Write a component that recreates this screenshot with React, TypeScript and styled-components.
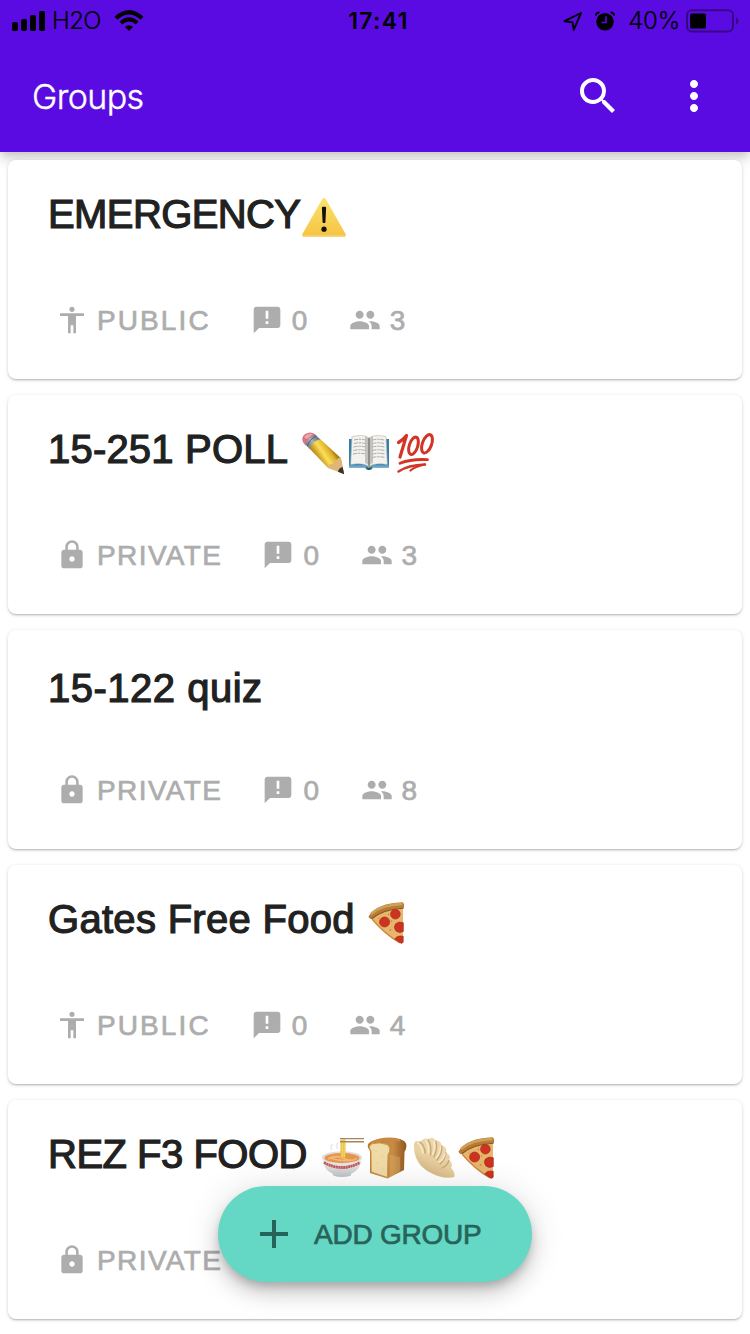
import React from 'react'
import styled, { createGlobalStyle } from 'styled-components'
import {
  MdAccessibility,
  MdAdd,
  MdAnnouncement,
  MdLock,
  MdMoreVert,
  MdPeople,
  MdSearch,
} from 'react-icons/md'

const GlobalStyle = createGlobalStyle`
  * {
    box-sizing: border-box;
  }

  body {
    margin: 0;
    background: #fff;
    font-family: 'Liberation Sans', Arial, sans-serif;
  }
`

const Screen = styled.div`
  width: 750px;
  height: 1334px;
  overflow: hidden;
  position: relative;
`

const AppBar = styled.header`
  height: 152px;
  background: #5a0be2;
  box-shadow:
    0 4px 8px -2px rgba(0, 0, 0, 0.1),
    0 8px 10px rgba(0, 0, 0, 0.1),
    0 2px 20px rgba(0, 0, 0, 0.08);
`

const StatusBar = styled.div`
  display: grid;
  grid-template-columns: 1fr auto 1fr;
  align-items: center;
  height: 41px;
  padding: 0 11px 0 12px;
  color: #000;
  font-family: Inter, sans-serif;
  font-size: 24px;
`

const StatusGroup = styled.div<{ $end?: boolean }>`
  display: flex;
  align-items: center;
  justify-content: ${({ $end }) => ($end ? 'flex-end' : 'flex-start')};
`

const Carrier = styled.span`
  font-weight: 300;
  letter-spacing: -0.6px;
  margin: 0 13px 0 6px;
  -webkit-text-stroke: 0.2px #000;
`

const Clock = styled.span`
  font-weight: 600;
  font-size: 23px;
  letter-spacing: 1.3px;
  padding-left: 6px;
`

const Percent = styled.span`
  font-weight: 300;
  letter-spacing: -0.2px;
  margin: 0 6px 0 13px;
  -webkit-text-stroke: 0.2px #000;
`

const Toolbar = styled.div`
  display: flex;
  align-items: center;
  height: 110px;
  padding: 0 32px;
  color: #fff;
`

const ToolbarTitle = styled.h1`
  flex: 1;
  margin: 0;
  font-family: Inter, sans-serif;
  font-size: 34px;
  font-weight: 300;
  letter-spacing: -0.6px;
  -webkit-text-stroke: 0.4px #fff;
`

const ToolbarButton = styled.button`
  display: flex;
  margin-left: 48px;
  padding: 0;
  border: 0;
  background: none;
  color: inherit;
  font-size: 48px;
`

const List = styled.main`
  display: flex;
  flex-direction: column;
  gap: 16px;
  padding: 8px;
  position: relative;
`

const Card = styled.article`
  height: 219px;
  padding: 31px 40px 0;
  border-radius: 8px;
  background: #fff;
  box-shadow:
    0 2px 2px -1px rgba(0, 0, 0, 0.16),
    0 1px 2px rgba(0, 0, 0, 0.08),
    0 1px 4px rgba(0, 0, 0, 0.12);
`

const TitleRow = styled.div<{ $low?: boolean }>`
  display: flex;
  align-items: flex-start;
  height: 50px;
  margin-top: ${({ $low }) => ($low ? '4px' : '0')};
  margin-bottom: ${({ $low }) => ($low ? '59px' : '63px')};
`

const Title = styled.h2<{ $width: number; $tracking: number }>`
  width: ${({ $width }) => $width}px;
  margin: 0;
  white-space: nowrap;
  color: #212121;
  font-size: 40px;
  font-weight: 400;
  line-height: 46px;
  letter-spacing: ${({ $tracking }) => $tracking}px;
  -webkit-text-stroke: 1.2px #212121;
`

const Meta = styled.div`
  display: flex;
  gap: 40px;
  padding-left: 8px;
`

const MetaItem = styled.span<{ $tracking: number }>`
  display: flex;
  align-items: center;
  gap: 9px;
  height: 32px;
  color: #adadad;
  font-size: 28px;
  line-height: 34px;
  letter-spacing: ${({ $tracking }) => $tracking}px;
  -webkit-text-stroke: 0.7px #adadad;

  svg {
    font-size: 32px;
    stroke: none;
  }
`

const MetaText = styled.span`
  padding-top: 2px;
`

const Fab = styled.button`
  position: absolute;
  top: 1186px;
  left: 218px;
  display: flex;
  align-items: center;
  gap: 16px;
  width: 314px;
  height: 96px;
  padding: 0 0 0 32px;
  border: 0;
  border-radius: 48px;
  background: #64d8c4;
  color: #28635a;
  font-family: inherit;
  font-size: 28px;
  letter-spacing: -0.25px;
  white-space: nowrap;
  -webkit-text-stroke: 0.7px #28635a;
  box-shadow:
    0 6px 10px -2px rgba(0, 0, 0, 0.2),
    0 12px 20px rgba(0, 0, 0, 0.14),
    0 2px 36px rgba(0, 0, 0, 0.12);

  svg {
    font-size: 48px;
    stroke: none;
  }
`

const Glyph = styled.svg`
  flex: none;
  width: 46px;
  height: 46px;
  margin-top: 4px;
`

const SignalIcon = () => (
  <svg width="34" height="22" viewBox="0 0 34 22">
    <rect x="0" y="12" width="6" height="9" rx="1.8" />
    <rect x="9" y="9" width="6" height="12" rx="1.8" />
    <rect x="18" y="5" width="6" height="16" rx="1.8" />
    <rect x="27" y="1" width="6" height="20" rx="1.8" />
  </svg>
)

const WifiIcon = () => (
  <svg width="30" height="22" viewBox="0 0 30 22" fill="none" stroke="#000">
    <path d="M2 8.3Q15-3.8 28 8.3" strokeWidth="4.2" />
    <path d="M6.8 13Q15 5.6 23.2 13" strokeWidth="4" />
    <path d="M15 21l-4-4q4-3.3 8 0z" fill="#000" stroke="none" />
  </svg>
)

const LocationIcon = () => (
  <svg width="20" height="20" viewBox="0 0 20 20" fill="none" stroke="#000" strokeWidth="1.9" strokeLinejoin="round">
    <path d="M18 2L1.5 10.2l8 1.1 1.2 7.6z" />
  </svg>
)

const AlarmIcon = styled(({ className }: { className?: string }) => (
  <svg className={className} width="20" height="20" viewBox="0 0 20 20">
    <circle cx="10" cy="10.8" r="8.8" />
    <path d="M.6 4.6Q1 1.3 4.5 1.3M19.4 4.6Q19 1.3 15.5 1.3" fill="none" stroke="#000" strokeWidth="1.8" />
    <path d="M11 5.2v6.3H6.5" fill="none" stroke="#5a0be2" strokeWidth="1.6" />
  </svg>
))`
  margin-left: 12px;
`

const BatteryIcon = () => (
  <svg width="53" height="24" viewBox="0 0 53 24">
    <rect x="1" y="1.2" width="46" height="21.4" rx="5" fill="none" stroke="#000" strokeOpacity="0.4" strokeWidth="2" />
    <rect x="4" y="4.5" width="16" height="15" rx="1.5" />
    <path d="M50 8q5 4 0 8z" fillOpacity="0.4" />
  </svg>
)

const Warning = () => (
  <Glyph viewBox="0 0 46 46">
    <defs>
      <linearGradient id="warn" x2="0" y2="1">
        <stop stopColor="#fbe36b" />
        <stop offset="1" stopColor="#f6c343" />
      </linearGradient>
    </defs>
    <path d="M21.2 4.2Q23 1.8 24.8 4.2L44.6 39Q45.2 41.8 43 42H3Q.8 41.8 1.4 39z" fill="url(#warn)" />
    <path d="M1.5 40.6Q1.4 42 3 42H43Q44.6 42 44.5 40.6z" fill="#f8d887" />
    <path d="M20.9 13Q20.8 11.8 22 11.8h2q1.2 0 1.1 1.2L24.4 27.6q-1.4 1-2.8 0z" fill="#111" />
    <circle cx="23" cy="34.2" r="2.6" fill="#111" />
  </Glyph>
)

const Pencil = () => (
  <Glyph viewBox="0 0 46 46">
    <defs>
      <linearGradient id="wood" gradientUnits="userSpaceOnUse" x1="33" y1="20" x2="18" y2="30">
        <stop stopColor="#a87d14" />
        <stop offset="0.2" stopColor="#e0b32b" />
        <stop offset="0.55" stopColor="#fbdf58" />
        <stop offset="1" stopColor="#b58418" />
      </linearGradient>
      <linearGradient id="band" x1="0" y1="1" x2="1" y2="0">
        <stop stopColor="#5b6271" />
        <stop offset="0.5" stopColor="#aab2bc" />
        <stop offset="1" stopColor="#474e5e" />
      </linearGradient>
    </defs>
    <path d="M2.3 8.5Q3 3.5 10 2.4Q13.5 2.3 16 5L6 15.5Q2 12.5 2.3 8.5z" fill="#d97580" />
    <path d="M4 7Q8 2.5 13 4L7 9z" fill="#f0a7ac" />
    <path d="M14.8 4.4L20.6 9.4Q13 11 10 19.2L5.3 14.4Q7.4 7.6 14.8 4.4z" fill="url(#band)" />
    <path d="M16.7 6Q9.2 9.4 7.3 16.1" stroke="#565d6c" fill="none" />
    <path d="M20.3 9.2L40.8 28L44 44L28 38L9.5 18.5Q12 11.4 20.3 9.2z" fill="url(#wood)" />
    <path d="M28 37.8Q29.2 33 33.5 34Q33.5 29.5 37 30Q38 26.8 40.8 28L44 44z" fill="#dfb679" />
    <path d="M38 41.8Q39 37.5 42.7 37.3L44.2 44.2z" fill="#343434" />
  </Glyph>
)

const Book = () => (
  <Glyph viewBox="0 0 46 46">
    <path d="M3 9h40v28.5H27q-1 2.5-4 2.5t-4-2.5H3z" fill="#347eaa" />
    <path d="M3 35.2h40v2.3H3z" fill="#69a5c9" />
    <path d="M6 6.5Q18 4 23 8Q28 4 40 6.5L41.3 34.5Q29 32.5 23 36.5Q17 32.5 4.7 34.5z" fill="#f3f2ee" stroke="#b8b4ac" strokeWidth="0.6" />
    <path d="M19 6.5q3.3.5 4 2v27q-1.4-2-4-2.5zM27 6.5q-3.3.5-4 2v27q1.4-2 4-2.5z" fill="#c4c2be" />
    <path d="M23 8v28" stroke="#595b5b" />
    <path
      d="M8 10Q14 8.5 19.5 10M8 13.5Q14 12 19.5 13.5M7.5 17Q14 15.5 19.5 17M7.5 20.5Q14 19 19.5 20.5M7 24Q14 22.5 19.5 24M26.5 10Q32 8.5 38 10M26.5 13.5Q32 12 38 13.5M26.5 17Q32 15.5 38.5 17M26.5 20.5Q32 19 38.5 20.5M26.5 24Q32 22.5 39 24M26.5 27.5Q32 26 39 27.5"
      fill="none"
      stroke="#a3a3a3"
      strokeWidth="0.9"
      strokeDasharray="4 0.8 2.5 0.7"
    />
    <path d="M20.5 36.5q2.5 1.8 5 0v2q-2.5 2.8-5 0z" fill="#1c5775" />
    <path d="M21.5 36.5h3v1.5h-3z" fill="#829a43" />
  </Glyph>
)

const Hundred = () => (
  <Glyph viewBox="0 0 46 46" fill="none" stroke="#d33426" strokeLinecap="round" strokeLinejoin="round">
    <path d="M6.5 12.5Q11 10 14.5 5.5L8 27" strokeWidth="3.2" />
    <ellipse cx="21.5" cy="15.8" rx="4.2" ry="9" transform="rotate(18 21.5 15.8)" strokeWidth="3" />
    <ellipse cx="35" cy="13.8" rx="4.6" ry="9.6" transform="rotate(20 35 13.8)" strokeWidth="3" />
    <path d="M8 33.2Q20 28.7 35.5 29.7" strokeWidth="2.8" />
    <path d="M6.5 41.5Q16 35 33 34.5" strokeWidth="2.4" />
    <path d="M33 34.5Q24 36 18.5 40.5" strokeWidth="2.2" />
  </Glyph>
)

const Pizza = () => (
  <Glyph viewBox="0 0 46 46">
    <path d="M3 17.5Q14 8.5 35 8v33.5q-.5 3-3 1.6Q15 33 3 17.5z" fill="#e8b56c" />
    <path d="M4 19Q16 33.5 32 43" fill="none" stroke="#cd8740" strokeWidth="1.3" />
    <path d="M.6 16.2Q9 3 34.5 2.2Q36.8 3.5 35.8 8Q16 9 4 19Q.8 19 .6 16.2z" fill="#b77b37" />
    <path d="M3 14Q13 4.8 34.5 4" fill="none" stroke="#cfa056" strokeWidth="2.4" />
    <path d="M4 18.5Q16 9 35.5 8.2" fill="none" stroke="#8d5428" strokeWidth="1.1" />
    <g fill="#cc3320" stroke="#a92c1b" strokeWidth="0.7">
      <circle cx="16.6" cy="22" r="5" />
      <circle cx="27.4" cy="14.2" r="4.8" />
      <path d="M35.3 22.8v8.6q-4 2.3-7.3-.5-3-3.4-.5-7 3.5-3 7.8-1.1z" />
      <path d="M35.2 36.3v5.7q-.7 2-3 .7l-5.4-3.6q2.3-4 8.4-2.8z" />
    </g>
    <g fill="#b97b39">
      <circle cx="22.5" cy="30" r="0.8" />
      <circle cx="20.5" cy="14.5" r="0.7" />
      <circle cx="23.5" cy="21" r="0.7" />
      <circle cx="11" cy="18" r="0.6" />
    </g>
  </Glyph>
)

const Ramen = () => (
  <Glyph viewBox="0 0 46 46">
    <defs>
      <linearGradient id="bowl" x2="0" y2="1">
        <stop stopColor="#fafafa" />
        <stop offset="1" stopColor="#bfc2c4" />
      </linearGradient>
    </defs>
    <path d="M12 15Q9 12 13 9M18 14Q15 11 18 8" fill="none" stroke="#ececec" strokeWidth="1.8" />
    <path d="M2 22Q3 35 13 39v1.5q9 3 18 0v-1.5Q41 35 42 22z" fill="url(#bowl)" />
    <ellipse cx="22" cy="22.5" rx="20" ry="6.2" fill="#dedede" />
    <ellipse cx="22" cy="23" rx="17.5" ry="5" fill="#e8954c" />
    <path d="M8 24Q16 19.5 24 23.5T37 23M10 23Q21 27 34 25" fill="none" stroke="#f2b878" strokeWidth="1.6" />
    <path d="M4 27.5Q22 37.5 40 27.5" fill="none" stroke="#c4575a" strokeWidth="2.8" strokeDasharray="2.1 0.4" />
    <path d="M20.5 4.5h5V21q-1.5 5-5 0z" fill="#e9bd3b" />
    <path d="M22.3 4.5V22M24.2 5V22" stroke="#f9e181" strokeWidth="0.8" />
    <path d="M20 3.6h24M20 6.8h24" stroke="#a78558" strokeWidth="1.4" />
  </Glyph>
)

const Bread = () => (
  <Glyph viewBox="0 0 46 46">
    <defs>
      <linearGradient id="crust">
        <stop stopColor="#bd792d" />
        <stop offset="0.65" stopColor="#c88c43" />
        <stop offset="1" stopColor="#8f561f" />
      </linearGradient>
    </defs>
    <path d="M4 16Q-1 10 5 6.5Q19 .3 34 4Q44 7 38.5 17L38 35Q30 39 21.5 43.5L4 38z" fill="url(#crust)" />
    <path d="M5 8Q19 2 34 5.5" fill="none" stroke="#c98843" strokeWidth="2" />
    <path d="M5 16Q1.4 11.3 6 8.7Q14 6.7 21 9.5Q26 12.5 22 20l-.6 22.5L5.2 37z" fill="#efdba6" stroke="#cc974d" strokeWidth="1" />
    <path d="M23.5 20v22L34 36V22z" fill="#dbb271" fillOpacity="0.4" />
    <g fill="#e4cd92">
      <circle cx="10" cy="16" r="0.8" />
      <circle cx="16" cy="21" r="0.8" />
      <circle cx="11" cy="28" r="0.8" />
      <circle cx="17" cy="34" r="0.8" />
    </g>
  </Glyph>
)

const Dumpling = () => (
  <Glyph viewBox="0 0 46 46">
    <defs>
      <linearGradient id="dough" x1="0.8" y1="0" x2="0.25" y2="1">
        <stop stopColor="#f0dcb6" />
        <stop offset="0.55" stopColor="#e8cf9f" />
        <stop offset="1" stopColor="#d0ad7c" />
      </linearGradient>
    </defs>
    <path
      d="M2 9Q3 4 8 7Q12 1.5 16 4.5Q21 .5 24 6Q28 4.5 30 11Q35.5 11 34 18Q40 20 37 25.5Q41.5 28 39 33Q43 36 42.5 42Q31 44.5 19 38Q1 29 2 9z"
      fill="url(#dough)"
    />
    <path
      d="M8 7Q13 11 13 18M16 4.5Q20 11 18.5 20M24 6Q26 13 22 22M30 11Q30 19 25 25M34 18Q33 25 28 29M37 25.5Q35 31 30 33"
      fill="none"
      stroke="#c6a474"
      strokeWidth="1.3"
      strokeLinecap="round"
    />
    <path d="M6 8Q10 12 11 18M14 5.5Q17 11 16.5 18M22 6.5Q23.5 13 20.5 19M28.5 12Q28 19 24 23M33 19Q31 25 27 27" fill="none" stroke="#f6e8c8" strokeWidth="1.6" strokeLinecap="round" />
  </Glyph>
)

interface Group {
  name: string;
  width: number;
  tracking: number;
  isPublic?: boolean;
  members?: number;
  emojis: React.FC[];
}

const groups: Group[] = [
  { name: 'EMERGENCY', width: 253, tracking: -0.6, isPublic: true, members: 3, emojis: [Warning] },
  { name: '15-251 POLL', width: 252, tracking: 0.2, members: 3, emojis: [Pencil, Book, Hundred] },
  { name: '15-122 quiz', width: 252, tracking: 0.5, members: 8, emojis: [] },
  { name: 'Gates Free Food', width: 320, tracking: 0.3, isPublic: true, members: 4, emojis: [Pizza] },
  { name: 'REZ F3 FOOD', width: 272, tracking: -0.5, emojis: [Ramen, Bread, Dumpling, Pizza] },
]

const GroupCard: React.FC<{ group: Group }> = ({ group }) => (
  <Card>
    <TitleRow $low={group.emojis.length === 0}>
      <Title $width={group.width} $tracking={group.tracking}>{group.name}</Title>
      {group.emojis.map((Emoji, i) => (
        <Emoji key={i} />
      ))}
    </TitleRow>
    <Meta>
      <MetaItem $tracking={group.isPublic ? 2.1 : 1.4}>
        {group.isPublic ? <MdAccessibility /> : <MdLock />}
        <MetaText>{group.isPublic ? 'PUBLIC' : 'PRIVATE'}</MetaText>
      </MetaItem>
      {group.members !== undefined && (
        <>
          <MetaItem $tracking={1.5}>
            <MdAnnouncement />
            <MetaText>0</MetaText>
          </MetaItem>
          <MetaItem $tracking={1.5}>
            <MdPeople />
            <MetaText>{group.members}</MetaText>
          </MetaItem>
        </>
      )}
    </Meta>
  </Card>
)

const App: React.FC = () => {
  return (
    <Screen>
      <GlobalStyle />
      <AppBar>
        <StatusBar>
          <StatusGroup>
            <SignalIcon />
            <Carrier>H2O</Carrier>
            <WifiIcon />
          </StatusGroup>
          <Clock>17:41</Clock>
          <StatusGroup $end>
            <LocationIcon />
            <AlarmIcon />
            <Percent>40%</Percent>
            <BatteryIcon />
          </StatusGroup>
        </StatusBar>
        <Toolbar>
          <ToolbarTitle>Groups</ToolbarTitle>
          <ToolbarButton aria-label="Search">
            <MdSearch />
          </ToolbarButton>
          <ToolbarButton aria-label="More">
            <MdMoreVert />
          </ToolbarButton>
        </Toolbar>
      </AppBar>
      <List>
        {groups.map((group) => (
          <GroupCard key={group.name} group={group} />
        ))}
      </List>
      <Fab>
        <MdAdd />
        <MetaText>ADD GROUP</MetaText>
      </Fab>
    </Screen>
  )
}

export default App
